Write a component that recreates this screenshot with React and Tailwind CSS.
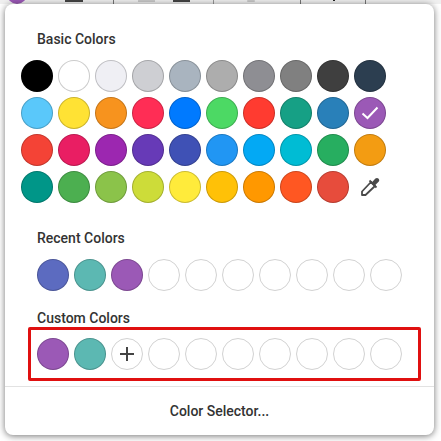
import React from "react";

const basic = [
  ["#000000","#ffffff","#efeff4","#cecfd3","#a9b4bf","#adadad","#8e8e93","#808080","#3f3f3f","#2c3e50"],
  ["#5ac8fa","#ffe234","#f7931e","#ff2d55","#007aff","#4cd964","#ff3b30","#16a085","#2980b9","#9b59b6"],
  ["#f44336","#e91e63","#9c27b0","#673ab7","#3f51b5","#2196f3","#03a9f4","#00bcd4","#27ae60","#f39c12"],
  ["#009688","#4caf50","#8bc34a","#cddc39","#ffeb3b","#ffc107","#ff9800","#ff5722","#e74c3c"],
].flat();

function Swatch({ color, children }) {
  return (
    <div
      className="w-8 h-8 rounded-full border border-black/20 flex items-center justify-center shrink-0"
      style={{ backgroundColor: color }}
    >
      {children}
    </div>
  );
}

function Empty({ children }) {
  return (
    <div className="w-8 h-8 rounded-full border border-[#d2d2d2] bg-white flex items-center justify-center shrink-0">
      {children}
    </div>
  );
}

function Label({ children, className }) {
  return (
    <div className={"text-sm leading-4 font-medium text-[#333333] " + className}>{children}</div>
  );
}

export default function App() {
  return (
    <div className="w-[441px] h-[441px] overflow-hidden bg-white font-['Roboto',sans-serif]">
      <div className="h-1 bg-[#f0f0f0] flex items-start overflow-hidden relative">
        <div className="w-5 h-5 rounded-full bg-[#9b59b6] ml-[7px] -mt-[16px] shrink-0" />
        <div className="w-[18px] h-0.5 bg-[#444444] ml-[38px] shrink-0" />
        <div className="w-px h-1 bg-[#777777] ml-[30px] shrink-0" />
        <div className="w-[17px] h-0.5 bg-[#c8c8c8] ml-6 shrink-0" />
        <div className="w-[17px] h-0.5 bg-[#444444] ml-[18px] shrink-0" />
        <div className="w-px h-1 bg-[#999999] ml-[23px] shrink-0" />
        <div className="w-2 h-0.5 bg-[#c8c8c8] rounded-full ml-[33px] shrink-0" />
        <div className="w-px h-1 bg-[#777777] ml-[45px] shrink-0" />
        <div className="w-0.5 h-px bg-[#222222] ml-8 shrink-0" />
        <div className="w-px h-1 bg-[#777777] ml-[30px] shrink-0" />
      </div>
      <div className="relative w-[429px] h-[431px] ml-[5px] bg-white rounded-[8px] shadow-[0_1px_7px_rgba(0,0,0,0.55)] flex flex-col">
        <Label className="mt-[27px] ml-8">Basic Colors</Label>
        <div className="grid grid-cols-[repeat(10,32px)] gap-[5px] mt-[13px] ml-4">
          {basic.map((c, i) => (
            <Swatch key={i} color={c}>
              {i === 19 && (
                <svg width="18" height="14" viewBox="0 0 18 14" fill="none" stroke="#ffffff" strokeWidth="2">
                  <path d="M1.5 7.5 L6.5 12 L16.5 1.5" />
                </svg>
              )}
            </Swatch>
          ))}
          <div className="w-8 h-8 flex items-center justify-center">
            <svg width="20" height="20" viewBox="0 0 20 20" fill="none" stroke="#4a4a4a" strokeWidth="1.8" strokeLinejoin="round">
              <path d="M11 5 L15 9 L5.5 18 L2 18 L2 14.500 Z" />
              <path d="M9.500 3.500 L16.500 10.500" />
              <path d="M12.500 6 L16 2.200 Q17 1.400 18 2.300 Q18.800 3.300 18 4.200 L14.200 7.800" fill="#4a4a4a" />
            </svg>
          </div>
        </div>
        <Label className="mt-[27px] ml-8">Recent Colors</Label>
        <div className="flex gap-[5px] mt-[13px] ml-8">
          <Swatch color="#5c6bc0" />
          <Swatch color="#5cb8b2" />
          <Swatch color="#9b59b6" />
          {Array.from({ length: 7 }).map((_, i) => <Empty key={i} />)}
        </div>
        <Label className="mt-[19px] ml-8">Custom Colors</Label>
        <div className="flex gap-[5px] ml-[23px] mt-px w-[393px] h-[54px] border-[3px] border-[#e01010] rounded-[2px] pt-2 pl-1.5 box-border">
          <Swatch color="#9b59b6" />
          <Swatch color="#5cb8b2" />
          <Empty>
            <svg width="16" height="16" viewBox="0 0 16 16" stroke="#444444" strokeWidth="2">
              <path d="M8 1 V15 M1 8 H15" />
            </svg>
          </Empty>
          {Array.from({ length: 7 }).map((_, i) => <Empty key={i} />)}
        </div>
        <div className="mt-[5px] border-t border-[#e2e2e2] flex-1 flex items-center justify-center text-sm font-medium text-[#333333]">
          Color Selector...
        </div>
      </div>
    </div>
  );
}
